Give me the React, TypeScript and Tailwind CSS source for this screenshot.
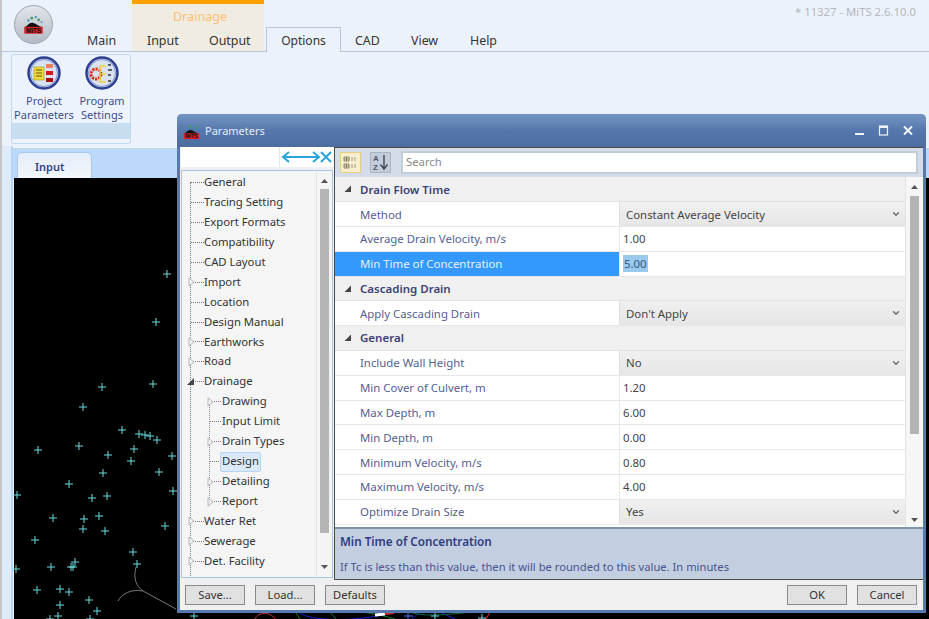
import React from 'react'
import { ChevronDown } from 'lucide-react'

// scatter of survey points on the black canvas, page coords
const points = [
  [167, 274], [156, 322], [102, 387], [153, 384], [83, 407], [122, 430], [139, 434], [145, 435], [150, 436], [157, 440],
  [38, 450], [79, 446], [108, 455], [134, 449], [131, 461], [172, 456], [103, 473], [159, 472], [69, 484], [17, 495],
  [92, 498], [107, 496], [173, 491], [53, 518], [84, 519], [99, 516], [83, 529], [105, 531], [165, 526], [35, 540],
  [133, 552], [137, 564], [75, 562], [71, 567], [73, 567], [51, 567], [16, 569], [37, 590], [60, 589], [69, 592],
  [89, 600], [60, 605], [97, 611], [58, 616], [90, 619], [50, 619], [194, 616], [435, 616], [482, 618],
]

type TreeItem = { label: string; level: number; arrow?: 'open' | 'closed'; selected?: boolean }

const treeItems: TreeItem[] = [
  { label: 'General', level: 0 },
  { label: 'Tracing Setting', level: 0 },
  { label: 'Export Formats', level: 0 },
  { label: 'Compatibility', level: 0 },
  { label: 'CAD Layout', level: 0 },
  { label: 'Import', level: 0, arrow: 'closed' },
  { label: 'Location', level: 0 },
  { label: 'Design Manual', level: 0 },
  { label: 'Earthworks', level: 0, arrow: 'closed' },
  { label: 'Road', level: 0, arrow: 'closed' },
  { label: 'Drainage', level: 0, arrow: 'open' },
  { label: 'Drawing', level: 1, arrow: 'closed' },
  { label: 'Input Limit', level: 1 },
  { label: 'Drain Types', level: 1, arrow: 'closed' },
  { label: 'Design', level: 1, selected: true },
  { label: 'Detailing', level: 1, arrow: 'closed' },
  { label: 'Report', level: 1, arrow: 'closed' },
  { label: 'Water Ret', level: 0, arrow: 'closed' },
  { label: 'Sewerage', level: 0, arrow: 'closed' },
  { label: 'Det. Facility', level: 0, arrow: 'closed' },
  { label: '3D View', level: 0, arrow: 'closed' },
]

type GridRow = { kind: 'head' | 'text' | 'select'; label: string; value?: string; selected?: boolean }

const gridRows: GridRow[] = [
  { kind: 'head', label: 'Drain Flow Time' },
  { kind: 'select', label: 'Method', value: 'Constant Average Velocity' },
  { kind: 'text', label: 'Average Drain Velocity, m/s', value: '1.00' },
  { kind: 'text', label: 'Min Time of Concentration', value: '5.00', selected: true },
  { kind: 'head', label: 'Cascading Drain' },
  { kind: 'select', label: 'Apply Cascading Drain', value: "Don't Apply" },
  { kind: 'head', label: 'General' },
  { kind: 'select', label: 'Include Wall Height', value: 'No' },
  { kind: 'text', label: 'Min Cover of Culvert, m', value: '1.20' },
  { kind: 'text', label: 'Max Depth, m', value: '6.00' },
  { kind: 'text', label: 'Min Depth, m', value: '0.00' },
  { kind: 'text', label: 'Minimum Velocity, m/s', value: '0.80' },
  { kind: 'text', label: 'Maximum Velocity, m/s', value: '4.00' },
  { kind: 'select', label: 'Optimize Drain Size', value: 'Yes' },
]

const Logo = ({ size }: { size: number }) => (
  <svg width={size} height={size} viewBox="0 0 40 40">
    <path d="M4 25 C10 22 12 17 17 17 C22 17 26 21 36 25 Z" fill="#111" />
    <circle cx="11" cy="13" r="2" fill="#3f8fc4" />
    <circle cx="17" cy="9" r="2.5" fill="#3fa05a" />
    <circle cx="24" cy="7" r="2" fill="#3f8fc4" />
    <circle cx="29" cy="12" r="2.4" fill="#3fa05a" />
    <circle cx="34" cy="16" r="1.6" fill="#3f8fc4" />
    <rect x="4" y="24" width="32" height="12" fill="#d3202a" />
    <text x="20" y="34" textAnchor="middle" fontSize="11" fontWeight="700" fill="#111" fontFamily="Liberation Sans">MiTS</text>
  </svg>
)

const RoundIcon = ({ children }: { children: React.ReactNode }) => (
  <svg width="34" height="34" viewBox="0 0 34 34">
    <circle cx="17" cy="17" r="15.5" fill="#d9e2f2" stroke="#2d3f91" strokeWidth="2.5" />
    <circle cx="17" cy="17" r="13.5" fill="none" stroke="#7f92c9" strokeWidth="1" />
    {children}
  </svg>
)

const Button = ({ label, className }: { label: string; className: string }) => (
  <div className={`absolute top-[585px] h-[20px] w-[60px] flex items-center justify-center bg-[#e1e1e1] border border-[#8a8a8a] text-[11.2px] text-[#333] ${className}`}>
    {label}
  </div>
)

const Tree = () => (
  <div className="relative pt-[1.5px] h-full overflow-hidden">
    <div className="absolute left-[8px] top-[11px] h-[400px] border-l border-dotted border-[#777]" />
    <div className="absolute left-[27px] top-[230px] h-[101px] border-l border-dotted border-[#888]" />
    {treeItems.map((item) => (
      <div key={item.label} className="relative h-[19.95px] flex items-center text-[11.3px] text-[#333] whitespace-nowrap">
        <span className={item.level === 0 ? 'absolute left-[9px] w-[13px] border-t border-dotted border-[#777]' : 'absolute left-[28px] w-[11px] border-t border-dotted border-[#777]'} />
        {item.arrow === 'closed' && (
          <svg className={item.level === 0 ? 'absolute left-[6px] top-[5px]' : 'absolute left-[25px] top-[5px]'} width="7" height="10" viewBox="0 0 7 10">
            <path d="M1 1 L6 5 L1 9 Z" fill="#f4f4f4" stroke="#b4b4b4" />
          </svg>
        )}
        {item.arrow === 'open' && (
          <svg className="absolute left-[4px] top-[5px]" width="9" height="9" viewBox="0 0 9 9">
            <path d="M8 1 L8 8 L1 8 Z" fill="#444" />
          </svg>
        )}
        {item.selected && <span className="absolute left-[38px] top-0 h-[20px] w-[41px] rounded-[2px] bg-[#dbe8f8] border border-[#b5d3f2]" />}
        <span className={item.level === 0 ? 'relative ml-[22px]' : 'relative ml-[40px]'}>{item.label}</span>
      </div>
    ))}
  </div>
)

const PropertyRow = ({ row }: { row: GridRow }) => {
  if (row.kind === 'head') {
    return (
      <div className="relative h-[24.8px] flex items-center bg-[#f0f0f0] border-b border-[#e2e2e2] text-[11.5px] font-semibold text-[#3c4279]">
        <svg className="absolute left-[9px] top-[8px]" width="8" height="8" viewBox="0 0 8 8">
          <path d="M7 0.5 L7 7 L0.5 7 Z" fill="#444" />
        </svg>
        <span className="ml-[25px]">{row.label}</span>
      </div>
    )
  }
  return (
    <div className="h-[24.8px] flex text-[11.4px] border-b border-[#e8e8e8]">
      <div className={row.selected ? 'w-[284px] pl-[25px] flex items-center bg-[#3399ff] text-[#e6f0fc]' : 'w-[284px] pl-[25px] flex items-center bg-white text-[#55608f]'}>
        {row.label}
      </div>
      <div className={row.kind === 'select' ? 'relative flex-1 pl-[6px] flex items-center border-l border-[#e0e0e0] bg-gradient-to-b from-[#f0f0f0] to-[#e6e6e6] text-[#444]' : 'flex-1 pl-[3px] flex items-center border-l border-[#e8e8e8] bg-white text-[#444]'}>
        {row.selected ? <span className="bg-[#99c9ef] text-[#3c5a80] px-[1px]">{row.value}</span> : <span>{row.value}</span>}
        {row.kind === 'select' && <ChevronDown className="absolute right-[4px] top-[7px] text-[#666]" size={10} strokeWidth={3} />}
      </div>
    </div>
  )
}

export default function App() {
  return (
    <div className="relative w-[929px] h-[619px] overflow-hidden bg-[#ecf2fb] font-['Noto_Sans',sans-serif]">
      {/* window edge */}
      <div className="absolute left-0 top-0 w-[2px] h-full bg-[#c6c6c6]" />

      {/* app button */}
      <div className="absolute left-[14px] top-[5px] w-[39px] h-[39px] rounded-full border border-[#9aa4b0] bg-gradient-to-b from-[#e2e5ea] to-[#b4bbc5] flex items-center justify-center">
        <Logo size={23} />
      </div>
      <div className="absolute right-[13px] top-[4px] text-[11.3px] leading-[16px] text-[#b4b8bf]">* 11327 - MiTS 2.6.10.0</div>

      {/* ribbon tabs */}
      <div className="absolute left-[132px] top-0 w-[132px] h-[51px] bg-[#f0ece2]">
        <div className="h-[4px] bg-[#ffa200]" />
        <div className="pt-[3px] pl-[4px] text-center text-[12.6px] leading-[20px] text-[#fcc074]">Drainage</div>
      </div>
      <span className="absolute left-[87px] top-[32px] text-[12.4px] leading-[18px] text-[#333]">Main</span>
      <span className="absolute left-[147px] top-[32px] text-[12.4px] leading-[18px] text-[#333]">Input</span>
      <span className="absolute left-[209px] top-[32px] text-[12.4px] leading-[18px] text-[#333]">Output</span>
      <span className="absolute left-[355px] top-[32px] text-[12.4px] leading-[18px] text-[#333]">CAD</span>
      <span className="absolute left-[411px] top-[32px] text-[12.4px] leading-[18px] text-[#333]">View</span>
      <span className="absolute left-[470px] top-[32px] text-[12.4px] leading-[18px] text-[#333]">Help</span>
      <div className="absolute left-0 top-[51px] w-full h-[1px] bg-[#b9c6d8]" />
      <div className="absolute left-[266px] top-[27px] w-[75px] h-[25px] pt-[2px] bg-[#ecf2fb] border border-b-0 border-[#b9c6d8] flex items-center justify-center text-[12px] text-[#333]">Options</div>

      {/* ribbon group */}
      <div className="absolute left-[11px] top-[54px] w-[120px] h-[90px] border border-[#c0d8f2] rounded-[3px] bg-[#edf3fd] overflow-hidden">
        <div className="absolute left-0 bottom-[4px] w-full h-[16px] bg-[#c9ddf1]" />
        <div className="absolute left-[15px] top-[1px]">
          <RoundIcon>
            <rect x="7" y="11" width="10" height="13" fill="#f2d93a" stroke="#a89320" strokeWidth="0.6" />
            <path d="M9 14 H15 M9 17 H15 M9 20 H15" stroke="#665a10" strokeWidth="1" />
            <rect x="19" y="8" width="7" height="4" fill="#e88060" />
            <rect x="19" y="15" width="7" height="4" fill="#d61818" />
            <rect x="19" y="22" width="7" height="4" fill="#a81010" />
          </RoundIcon>
        </div>
        <div className="absolute left-[73px] top-[1px]">
          <RoundIcon>
            <circle cx="11" cy="18" r="5" fill="none" stroke="#d8301c" strokeWidth="3" strokeDasharray="2.2 1" />
            <path d="M15 10 H21 M15 10 V26 H21 M16 18 H21" stroke="#efd23a" strokeWidth="1.5" fill="none" />
            <path d="M23 9 H26 M23 14 H27 M23 19 H26 M23 25 H26" stroke="#333" strokeWidth="1.5" />
          </RoundIcon>
        </div>
        <div className="absolute left-[2px] top-[39px] w-[60px] text-center text-[11px] leading-[13.5px] text-[#3d4f8f]">Project<br />Parameters</div>
        <div className="absolute left-[61px] top-[39px] w-[58px] text-center text-[11px] leading-[13.5px] text-[#3d4f8f]">Program<br />Settings</div>
      </div>

      {/* document tabs strip */}
      <div className="absolute left-[10px] top-[148px] w-[919px] h-[30px] bg-[#bcd9fb] border-t border-[#c5d3e5]" />
      <div className="absolute left-[17px] top-[152px] w-[75px] h-[26px] pl-[17px] pt-[3px] rounded-t-[5px] border border-b-0 border-[#a9c8ee] bg-gradient-to-b from-[#e4ecf8] to-[#f3f7fd] flex items-center text-[11px] font-semibold text-[#34418c]">Input</div>
      <div className="absolute left-[2px] top-[146px] w-[11px] h-[473px] bg-[#dfebfb] border-r-2 border-[#b8d6fa]" />

      {/* canvas */}
      <svg className="absolute left-0 top-0" width="929" height="619">
        <rect x="14" y="178" width="915" height="441" fill="#000" />
        <path d="M136 567 C133 578 136 586 143 591 L176 609" stroke="#777" fill="none" />
        <path d="M118 601 C122 593 132 589 143 591" stroke="#777" fill="none" />
        <path d="M255 619 C258 612 270 611 275 619" stroke="#c33" fill="none" />
        <path d="M296 613 L300 619 M330 612 L336 619 M395 619 C385 616 372 613 360 612" stroke="#0a7a2a" fill="none" />
        <path d="M298 612 C310 622 360 622 395 612 M420 612 L412 619 M440 612 L455 619" stroke="#1420d0" fill="none" />
        <path d="M410 612 C420 616 440 616 470 612" stroke="#0f6a3a" fill="none" />
        <path d="M404 616 H413 M408 612 V619" stroke="#4a6cf0" fill="none" />
        <path d="M375 615 L385 614" stroke="#fff" strokeWidth="3" />
        <path d="M385 614 L394 613" stroke="#d22" strokeWidth="2" />
        <path d="M486 619 L490 612" stroke="#c33" fill="none" />
        {points.map(([x, y], i) => (
          <path key={i} d={`M${x - 4} ${y} H${x + 4} M${x} ${y - 4} V${y + 4}`} stroke="#6adcdc" strokeWidth="1" fill="none" />
        ))}
      </svg>

      {/* Parameters dialog */}
      <div className="absolute left-0 top-0 w-[929px] h-[619px]">
        <div className="absolute left-[177px] top-[114px] w-[749px] h-[499px] rounded-t-[5px] bg-[#f0f0f0] border-[3px] border-t-0 border-[#577aae]">
          <div className="absolute left-[-3px] right-[-3px] top-0 h-[33px] pt-[2px] rounded-t-[5px] bg-gradient-to-b from-[#7595c3] via-[#5677ac] to-[#4d6ca0] flex items-center">
            <span className="ml-[5px] w-[19px] h-[19px] flex items-center justify-center"><Logo size={19} /></span>
            <span className="ml-[4px] text-[11px] text-[#e4ebf5]">Parameters</span>
          </div>
        </div>
        <svg className="absolute left-[852px] top-[124px]" width="66" height="14" viewBox="0 0 66 14">
          <path d="M3 10 H12" stroke="#eef3fa" strokeWidth="2" />
          <rect x="27.5" y="2" width="8" height="9" fill="none" stroke="#eef3fa" strokeWidth="1.2" />
          <path d="M27.5 3 H35.5" stroke="#eef3fa" strokeWidth="2" />
          <path d="M52 2.5 L60 10.5 M60 2.5 L52 10.5" stroke="#eef3fa" strokeWidth="2" />
        </svg>

        {/* tree filter */}
        <div className="absolute left-[181px] top-[147px] w-[153px] h-[20px] bg-white flex">
          <div className="w-[99px] h-full bg-white border-r border-[#e6e6e6]" />
          <svg width="54" height="20" viewBox="0 0 54 20">
            <path d="M3 10 H39 M9 5 L3 10 L9 15 M33 5 L39 10 L33 15" stroke="#2aa3de" strokeWidth="2" fill="none" />
            <path d="M41 5 L51 15 M51 5 L41 15" stroke="#2aa3de" strokeWidth="2" />
          </svg>
        </div>

        {/* tree */}
        <div className="absolute left-[181px] top-[170px] w-[152px] h-[408px] bg-[#f5f5f5] border border-[#a9c6e6] pr-[16px]">
          <Tree />
          <div className="absolute right-0 top-0 w-[16px] h-full bg-[#f4f4f4] border-l border-[#e4e4e4]">
            <svg className="absolute left-[4px] top-[8px]" width="7" height="4"><path d="M0 4 L3.5 0 L7 4 Z" fill="#555" /></svg>
            <div className="absolute left-[3px] top-[18px] w-[9px] h-[344px] bg-[#b4b4b4]" />
            <svg className="absolute left-[4px] bottom-[8px]" width="7" height="4"><path d="M0 0 L3.5 4 L7 0 Z" fill="#555" /></svg>
          </div>
        </div>

        {/* property grid */}
        <div className="absolute left-[334px] top-[147px] w-[589px] h-[433px] border-l border-t border-b border-[#4a4a4a] bg-white">
          <div className="relative h-[29.4px] bg-[#d3dce8]">
            <div className="absolute left-[5px] top-[4px] w-[21px] h-[21px] bg-[#f8eecb] border border-[#e8cd85]">
              <svg width="19" height="19" viewBox="0 0 19 19">
                <path d="M3 4 H8 V8 H3 Z M3 11 H8 V15 H3 Z M5.5 4 V8 M3 6 H8 M5.5 11 V15 M3 13 H8" stroke="#77705a" strokeWidth="0.8" fill="none" />
                <path d="M10 5 H16 M10 7 H16 M10 12 H16 M10 14 H16" stroke="#9a9a8a" strokeWidth="1" strokeDasharray="2 1" />
              </svg>
            </div>
            <div className="absolute left-[35px] top-[4px] w-[21px] h-[21px] bg-[#c3cdd9] border border-[#a9b5c4]">
              <svg width="19" height="19" viewBox="0 0 19 19">
                <text x="2" y="8" fontSize="8" fontWeight="700" fill="#556" fontFamily="Liberation Sans">A</text>
                <text x="2" y="17" fontSize="8" fontWeight="700" fill="#556" fontFamily="Liberation Sans">Z</text>
                <path d="M13 2 V15 M9.5 11.5 L13 16 L16.5 11.5" stroke="#445" strokeWidth="1.4" fill="none" />
              </svg>
            </div>
            <div className="absolute left-[66px] top-[3px] w-[517px] h-[23px] bg-white border-2 border-[#c0ccd8] pl-[3px] flex items-center text-[11.3px] text-[#8a8a8a]">Search</div>
          </div>
          <div className="flex h-[349.6px]">
            <div className="w-[570px] overflow-hidden">
              {gridRows.map((row) => <PropertyRow key={row.label} row={row} />)}
            </div>
            <div className="relative w-[18px] bg-[#f6f6f6] border-l border-[#e4e4e4]">
              <svg className="absolute left-[5px] top-[8px]" width="7" height="4"><path d="M0 4 L3.5 0 L7 4 Z" fill="#555" /></svg>
              <div className="absolute left-[4px] top-[19px] w-[9px] h-[238px] bg-[#b4b4b4]" />
              <svg className="absolute left-[5px] bottom-[5px]" width="7" height="4"><path d="M0 0 L3.5 4 L7 0 Z" fill="#555" /></svg>
            </div>
          </div>
          <div className="h-[52px] bg-[#c3cfe0] border-t-2 border-[#7f93ad] pl-[5px]">
            <div className="pt-[3px] leading-[18px] text-[11.7px] font-semibold text-[#2f3b80]">Min Time of Concentration</div>
            <div className="pt-[8px] leading-[18px] text-[11.2px] text-[#46548f]">If Tc is less than this value, then it will be rounded to this value. In minutes</div>
          </div>
        </div>

        <Button label="Save..." className="left-[185px]" />
        <Button label="Load..." className="left-[255px]" />
        <Button label="Defaults" className="left-[325px]" />
        <Button label="OK" className="left-[787px]" />
        <Button label="Cancel" className="left-[857px]" />
        <svg className="absolute left-[912px] top-[597px]" width="8" height="11" viewBox="0 0 8 11">
          <path d="M1 10 H7 M1 7 H7 M4 4 H7" stroke="#c4ccd6" strokeWidth="1" strokeDasharray="1 1" />
        </svg>
      </div>
    </div>
  )
}
